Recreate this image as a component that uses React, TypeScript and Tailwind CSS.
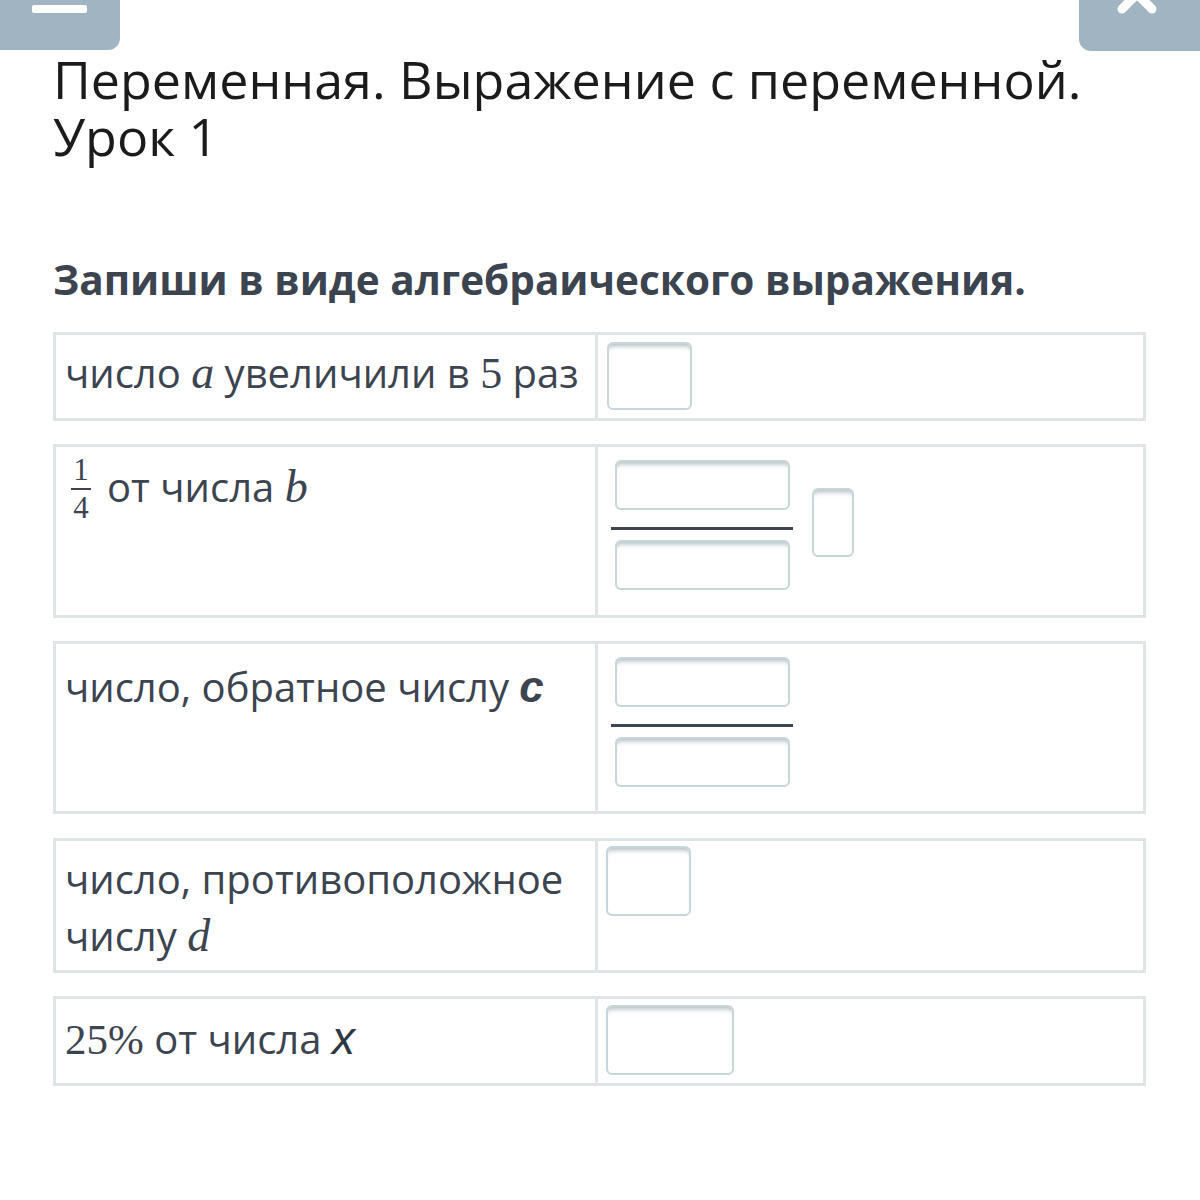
import React from "react";

const sans = { fontFamily: '"Open Sans", "Noto Sans", sans-serif' };
const serif = { fontFamily: '"Liberation Serif", "DejaVu Serif", serif' };
const lsans = { fontFamily: '"Liberation Sans", "Open Sans", sans-serif' };

function Box({ w, h }: { w: number; h: number }) {
  return (
    <div
      className="rounded-[6px] border-2 border-[#c6d6d9] bg-white shadow-[inset_0_6px_5px_-4px_rgba(110,130,140,0.55)]"
      style={{ width: w, height: h }}
    />
  );
}

function Fraction({ mt }: { mt: number }) {
  return (
    <div className="flex w-fit flex-col items-center" style={{ marginTop: mt }}>
      <Box w={175} h={50} />
      <div className="mt-[17px] h-[3px] w-[182px] bg-[#3d4550]" />
      <div className="mt-[10px]">
        <Box w={175} h={50} />
      </div>
    </div>
  );
}

function Row({
  h,
  left,
  right,
  mt,
}: {
  h: number;
  left: React.ReactNode;
  right: React.ReactNode;
  mt: number;
}) {
  return (
    <div
      className="flex border-[3px] border-[#dfe4e6] bg-white"
      style={{ height: h, marginTop: mt }}
    >
      <div className="w-[542px] shrink-0 border-r-[3px] border-[#dfe4e6] pl-[9px] pt-[9px] text-[40px] leading-[57px] text-[#3c4450]">
        {left}
      </div>
      <div className="flex-1">{right}</div>
    </div>
  );
}

export default function App() {
  return (
    <div className="relative h-[1200px] w-[1200px] overflow-hidden bg-white" style={sans}>
      {/* top bar */}
      <div className="flex items-start justify-between">
        <div className="relative h-[50px] w-[120px] rounded-br-[12px] bg-[#a0b4c1]">
          <div className="absolute left-[32px] top-[5px] h-[8px] w-[55px] rounded-[2px] bg-white" />
        </div>
        <div className="relative h-[51px] w-[121px] overflow-hidden rounded-bl-[12px] bg-[#a0b4c1]">
          <svg className="absolute left-0 top-0" width="121" height="51" viewBox="0 0 121 51">
            <line x1="43" y1="9" x2="73" y2="-21" stroke="white" strokeWidth="9" strokeLinecap="round" />
            <line x1="73" y1="9" x2="43" y2="-21" stroke="white" strokeWidth="9" strokeLinecap="round" />
          </svg>
        </div>
      </div>

      <div className="pl-[53px] pr-[54px]">
        <h1 className="mt-[-1px] text-[52px] font-normal leading-[57px] text-[#1b1b1b]">
          <span className="block">Переменная. Выражение с переменной.</span>
          <span className="block">Урок 1</span>
        </h1>

        <h2 className="mt-[90px] text-[40.5px] font-bold leading-[52px] text-[#3c4450]">
          Запиши в виде алгебраического выражения.
        </h2>

        <Row
          mt={26}
          h={89}
          left={
            <span>
              число{" "}
              <span className="text-[46px] italic" style={serif}>
                a
              </span>{" "}
              увеличили в{" "}
              <span className="text-[44px]" style={serif}>
                5
              </span>{" "}
              раз
            </span>
          }
          right={
            <div className="pl-[9px] pt-[7px]">
              <Box w={85} h={68} />
            </div>
          }
        />

        <Row
          mt={23}
          h={174}
          left={
            <div className="flex items-start">
              <div
                className="ml-[6px] mt-[-1px] flex flex-col items-center text-[31px] leading-[30px] text-[#3c4450]"
                style={serif}
              >
                <span>1</span>
                <span className="my-[3px] h-[2px] w-[20px] bg-[#3c4450]" />
                <span>4</span>
              </div>
              <span className="ml-[16px] mt-[2px]">
                от числа{" "}
                <span className="text-[46px] italic" style={serif}>
                  b
                </span>
              </span>
            </div>
          }
          right={
            <div className="flex items-start pl-[13px]">
              <Fraction mt={13} />
              <div className="ml-[19px] mt-[41px]">
                <Box w={42} h={69} />
              </div>
            </div>
          }
        />

        <Row
          mt={23}
          h={173}
          left={
            <div className="pt-[5px]">
              число, обратное числу{" "}
              <span className="text-[44px] font-bold italic" style={lsans}>
                c
              </span>
            </div>
          }
          right={
            <div className="flex items-start pl-[13px]">
              <Fraction mt={13} />
            </div>
          }
        />

        <Row
          mt={24}
          h={135}
          left={
            <div>
              число, противоположное
              <br />
              числу{" "}
              <span className="text-[46px] italic" style={serif}>
                d
              </span>
            </div>
          }
          right={
            <div className="pl-[8px] pt-[5px]">
              <Box w={85} h={70} />
            </div>
          }
        />

        <Row
          mt={23}
          h={90}
          left={
            <div className="pt-[2px]">
              <span className="text-[43px]" style={serif}>
                25%
              </span>{" "}
              от числа{" "}
              <span className="text-[46px] font-medium italic text-[#2f3742]" style={lsans}>
                x
              </span>
            </div>
          }
          right={
            <div className="pl-[8px] pt-[6px]">
              <Box w={128} h={70} />
            </div>
          }
        />
      </div>
    </div>
  );
}
